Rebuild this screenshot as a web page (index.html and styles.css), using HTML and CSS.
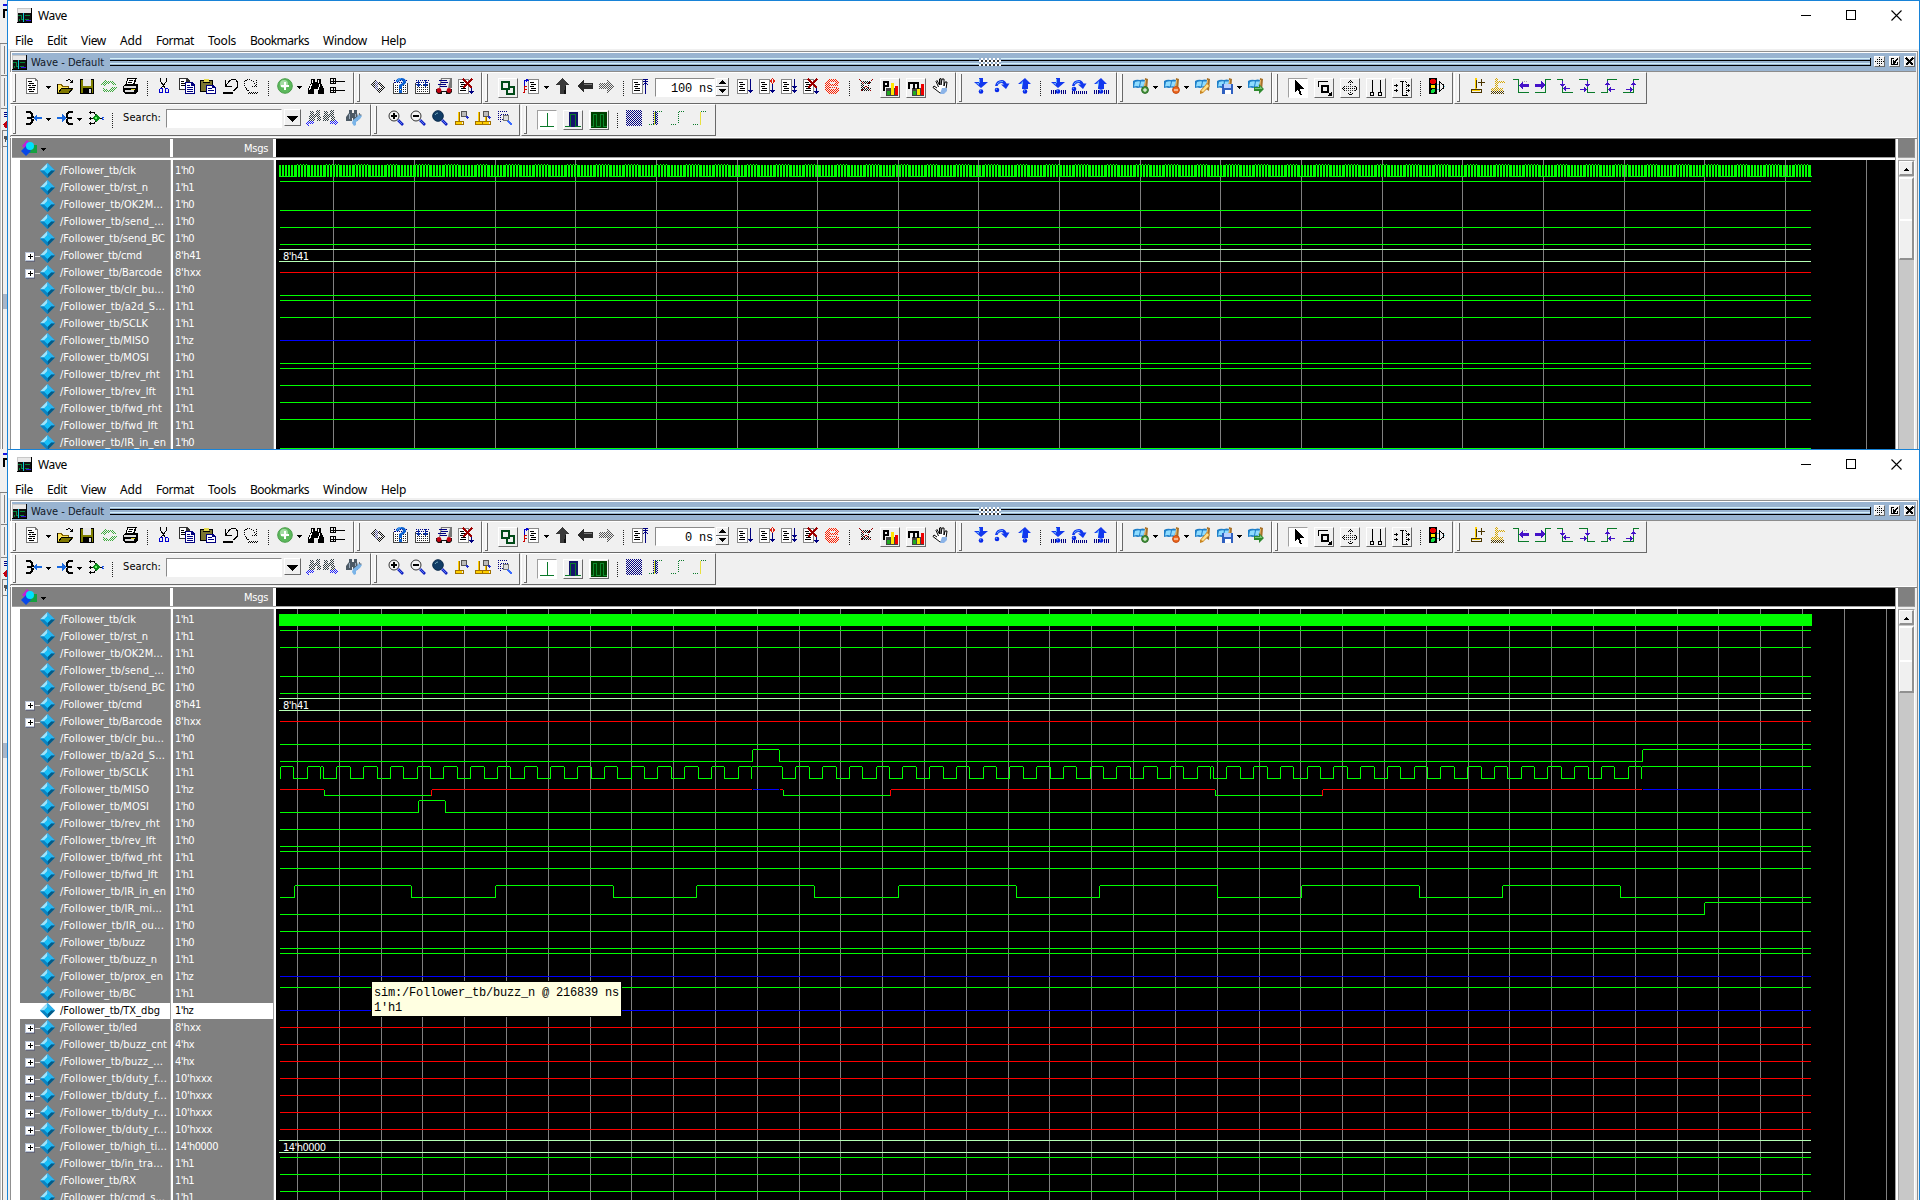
FILE: index.html
```html
<!DOCTYPE html>
<html lang="en">
<head>
<meta charset="utf-8">
<title>Wave</title>
<link rel="stylesheet" href="styles.css">
</head>
<body>
<main class="desktop" id="desktop"></main>
<script src="icons.js"></script>
<script src="wave.js"></script>
</body>
</html>
```
FILE: styles.css
```css
* { box-sizing: border-box; }
html, body { margin: 0; }
body { width: 1920px; height: 1200px; overflow: hidden; background: #f0f0f0; color: #000;
  font-family: "DejaVu Sans Condensed", "DejaVu Sans", sans-serif; font-size: 11px; }
svg { display: block; flex: none; }
.fit { display: inline-block; white-space: pre; flex: none; }
.desktop { display: flex; flex-direction: column; }
.patterns { position: absolute; }
.layer { display: flex; height: 449px; overflow: hidden; }
.layer.front { height: 751px; }
.behind { width: 7px; flex: none; }
.window { width: 1913px; flex: none; display: flex; flex-direction: column; border: 1px solid #1883d7; border-bottom: 0; background: #f0f0f0; }
.titlebar { height: 30px; flex: none; background: #fff; display: flex; padding: 7px 17px 0 9px; font: 12px/16px "Noto Sans", sans-serif; }
.titlebar .fit { margin-left: 6px; }
.controls { margin-left: auto; display: flex; gap: 34px; padding-top: 2px; }
.menubar { height: 18px; flex: none; background: #fff; display: flex; gap: 14px; padding-left: 7px; font: 12px/19px "Noto Sans", sans-serif; }
.frame { margin: 2px 1px 0 2px; flex: 1; min-height: 0; border: 1px solid #909090; border-bottom: 0; display: flex; flex-direction: column; box-shadow: inset 1px 1px #fff; padding: 1px 1px 0 1px; }
.dock { height: 19px; flex: none; display: flex; background: #99b4d1; border-bottom: 1px solid #8c8c8c; padding-top: 2px; }
.dock .fit { line-height: 16px; margin: 0 6px 0 4px; color: #101828; }
.grip { flex: 1; height: 8px; margin: 3px 3px 0 0; border-right: 1px solid #000; display: flex; justify-content: center;
  background: linear-gradient(#d4f0fa 0 1px, #99b4d1 1px 2px, #000 2px 3px, #99b4d1 3px 5px, #d4f0fa 5px 6px, #99b4d1 6px 7px, #000 7px); }
.dots { width: 22px; background: #99b4d1 conic-gradient(#fff 25%, #333 0 50%, #fff 0 75%, #99b4d1 0) 0 0 / 4px 4px; }
.dockbtns { display: flex; gap: 4px; padding: 1px 1px 0 0; }
.dockbtns span { width: 11px; height: 11px; background: #f0f0f0; border: 1px solid #fff; border-right-color: #696969; border-bottom-color: #696969; }
.toolbars { height: 66px; flex: none; margin-left: -2px; border-bottom: 1px solid #fff; }
.toolrow { display: flex; height: 32px; }
.group { height: 32px; flex: none; display: flex; align-items: flex-start; border: 1px solid #fff; border-right-color: #696969; border-bottom-color: #696969; }
.handle { width: 3px; height: 28px; margin: 1px 0 0 2px; background: #f8f8f8; border-right: 1px solid #696969; border-bottom: 1px solid #696969; flex: none; }
.icon { margin-top: 5px; flex: none; }
.caret { margin-top: 13px; flex: none; }
.sep { width: 1px; height: 15px; margin-top: 8px; flex: none; background: repeating-linear-gradient(#222 0 1px, transparent 1px 2px); }
.btn { height: 20px; margin-top: 5px; padding: 1px; flex: none; border: 1px solid #fff; border-right-color: #696969; border-bottom-color: #696969; background: #f0f0f0; }
.btn.on { background: #fff; border-color: #a0a0a0 #fff #fff #a0a0a0; }
.entry { height: 19px; margin-top: 5px; padding: 1px 1px 0 0; flex: none; background: #fff; border: 1px solid #fff; border-top-color: #8a8a8a; border-left-color: #8a8a8a; text-align: right; font: 12px/19px "Liberation Mono", monospace; }
.search { margin-top: 4px; }
.combo { height: 17px; margin-top: 4px; padding: 6px 2px; flex: none; border: 1px solid #fff; border-right-color: #696969; border-bottom-color: #696969; }
.spin { height: 18px; margin-top: 5px; flex: none; }
.label { margin-top: 6px; line-height: 14px; flex: none; }
.view { flex: 1; min-height: 0; display: flex; border-top: 1px solid #808080; margin-right: -1px; }
.list { width: 264px; flex: none; background: #fff; display: flex; flex-direction: column; }
.heads { height: 19px; flex: none; display: flex; border-bottom: 1px solid #a0a0a0; color: #fff; }
.head { background: #808080; line-height: 19px; display: flex; height: 18px; }
.head.names { width: 158px; padding: 1px 0 0 9px; }
.head.names .caret { margin: 8px 0 0 4px; }
.head.values { width: 100px; margin-left: 3px; padding-right: 5px; justify-content: flex-end; }
.rows { margin-top: 2px; flex: 1; min-height: 0; display: flex; color: #fff; }
.col { background: #808080; padding-top: 2px; overflow: hidden; }
.col.names { width: 150px; margin-left: 8px; flex: none; }
.col.values { width: 100px; flex: none; }
.rule { width: 3px; flex: none; background: #fff; border-left: 1px solid #a0a0a0; }
.row { height: 17px; display: flex; line-height: 18px; }
.row svg { margin-top: 1px; }
.expander { width: 20px; padding-left: 5px; flex: none; }
.col.names .fit { margin-left: 5px; }
.col.values .row { padding-left: 2px; }
.row.sel { color: #000; background: linear-gradient(#808080 1px, #fff 1px); }
.plot { width: 1619px; flex: none; position: relative; background: #000; }
.plotgap { height: 3px; background: #fff; border-top: 1px solid #a0a0a0; }
.plothead { height: 18px; background: #000; }
.plot text { font: 11px "DejaVu Sans Condensed", "DejaVu Sans", sans-serif; fill: #fff; }
.side { width: 17px; flex: none; display: flex; flex-direction: column; }
.corner { height: 19px; flex: none; background: #808080; border-bottom: 1px solid #a0a0a0; border-right: 1px solid #909090; }
.scroll { margin-top: 2px; flex: 1; background: #c8c8c8; border-left: 1px solid #a0a0a0; border-top: 1px solid #a0a0a0; border-right: 1px solid #fff; }
.up, .thumb { border: 1px solid #fff; border-right: 2px solid #909090; border-bottom: 2px solid #909090; background: #f0f0f0; }
.up { height: 15px; padding: 6px 3px; margin-bottom: 1px; }
.thumb { height: 83px; border-top-width: 2px; padding-top: 40px; }
.front .thumb { height: 67px; padding-top: 32px; }
.thumb::before { content: ""; display: block; height: 2px; background: #fff; }
.tip { position: absolute; left: 95px; top: 393px; width: 251px; height: 36px; border: 1px solid #000; background: #ffffe1; padding: 4px 2px; font: 12px/15px "Liberation Mono", monospace; color: #000; }
```
FILE: icons.js
```js
// Stroke, dotted-stroke and fill helpers for the 16x16 toolbar glyphs.
const S = (c, d, w = 1) => `<path d="${d}" fill="none" stroke="${c}" stroke-width="${w}"/>`;
const D = (c, d, w = 1) => `<path d="${d}" fill="none" stroke="${c}" stroke-width="${w}" stroke-dasharray="1 1"/>`;
const F = (c, d) => `<path d="${d}" fill="${c}"/>`;
const C = (c, x, y, r, s = 'none') => `<circle cx="${x}" cy="${y}" r="${r}" fill="${c}" stroke="${s}"/>`;
const svg = (w, h, body, cls = '', crisp = true, vb = `0 0 ${w} ${h}`) =>
  `<svg class="${cls}" width="${w}" height="${h}" viewBox="${vb}"${crisp ? ' shape-rendering="crispEdges"' : ''}>${body}</svg>`;

// Checkerboard paints used by disabled commands.
const paints = {};
const P = c => { const id = 'chk' + c.slice(1); paints[id] = c; return `url(#${id})`; };
const patternDefs = () => `<svg class="patterns" width="0" height="0"><defs>${Object.entries(paints).map(([id, c]) =>
  `<pattern id="${id}" width="2" height="2" patternUnits="userSpaceOnUse">${`<path shape-rendering="crispEdges" fill="${c}" d="M0 0h1v1H0zM1 1h1v1H1z"/>`}</pattern>`).join('')}</defs></svg>`;

const K = '#000', N = '#000080', G = '#0a7a2a', V = '#4412c8';
const page = x => F('#888', `M${x} 1h11v15h-11z`) + F('#fff', `M${x + 1} 2h9v13h-9z`) +
  S(K, `M${x + 2} 4.5h4M${x + 3} 6.5h5M${x + 2} 8.5h4M${x + 3} 10.5h5M${x + 2} 12.5h6`);
const tray = S(N, 'M2 4.5h2M12 4.5h2') + F('#444', 'M1 5h1v11h-1zM15 5h1v11h-1zM1 15h15v1h-15z') + F('#fff', 'M2 5h13v10h-13z') +
  D('#222', 'M3 7.5h12M3 9.5h12M3 11.5h12M3 13.5h12') + D(N, 'M2 2.5h13M3 4.5h12');
const ball = (x, y) => C('#0828e8', x, y, 2.3) + C('#5c9cff', x - .6, y - .8, .8);
const ticks = S(N, 'M1.5 12v4M3.5 12v4M5.5 12v4M11.5 12v4M13.5 12v4M15.5 12v4');
const arc = F('#1238ee', 'M1 8Q2 2 8 2q3 0 4.500 3.500L15.500 5.500 12 11 7 6.500h2.800Q8.800 4.500 7 5 4 5.500 3.500 8z') + S('#6cb0ff', 'M3 6Q5 3 9 3.500');
const book = F('#a8722a', 'M12 0l3 1-1 12-3-2z') + F('#f0c070', 'M12 2h1l-1 8h-1z') + F('#1f7fc8', 'M0 3q3-2 7-1 3-1 5 0l-2 8q-3-1-5 0-3-1-5 0z') +
  F('#8fdcff', 'M2 4q3-1 5-.500l-1 5q-2-1-5 0zM8 3.500h4l-2 5q-1-.500-3 0z');
const handleMag = S('#1020c0', 'M10 10l5 5', 2.6) + S('#6c8cff', 'M10 10l4 4', .8);
const cursorBase = x => S('#a07000', `M${x}.5 2v9M${x - 4}.5 11.500h8v3h-8z`) + S('#ffd000', `M${x - 1}.5 2v9M${x - 3} 12.500h6`) + S('#ffd000', `M${x - 3} 13.500h6`);
const mag2 = C('#bbb', 11, 4, 3, '#555') + S('#2030d0', 'M13.500 6.500l2 2', 2);
const edge = d => S(G, d);

const ICONS = {
  new: F('#777', 'M2 0h9l3 3v13h-12z') + F('#fff', 'M3 1h8v2h2v12h-10z') + S(K, 'M4 3.500h4M5 5.500h5M4 7.500h3M8 7.500h4M5 9.500h6M4 11.500h4M9 11.500h2M5 13.500h5'),
  open: S(K, 'M9.500 3q3-3 5 1M12.500 4.500h3v-3') + F('#806000', 'M0 6h5l1 2h6v7h-12z') + F('#ffe75a', 'M1 7h3l1 2h6v2h-7l-3 4z') + F('#807800', 'M4 11h12l-4 5h-12z') + S(K, 'M.500 6v9.500h11l4-5H4.500l-3 4'),
  save: F(K, 'M1 1h14v15h-14z') + F('#808000', 'M2 2h12v13h-12z') + F('#e8e8e8', 'M4 1h8v7h-8z') + F(K, 'M4 10h9v6h-9z') + F('#ddd', 'M10 11h2v4h-2z'),
  reload: F(P('#3caa3c'), 'M0 7l4-6 3 2q6-2 8 4h-3q-2-3-5-1L4 8zM16 9l-4 6-3-1q-6 2-8-4h3q2 3 5 1l3-2z'),
  print: F(K, 'M4 0h10l-2 6h3v7l-2 3H2l-2-2V8l3-2z') + F('#fff', 'M5 1h7l-2 5H4z') + F('#ddd', 'M1 8h12v2H1zM2 12h9v2H2z') + F('#e8dc28', 'M8 11h4v1h-4z') + S(K, 'M6 2.500h4M5 4.500h4'),
  cut: S(K, 'M4.500 0v3l5 8M10.500 0v3l-5 7') + S('#0000d0', 'M4.500 10.500h2v4h-3v-3zM9.500 10.500h2l1 1v3h-3z'),
  copy: F('#333', 'M0 0h8l3 3v9H0z') + F('#fff', 'M1 1h6v3h3v7H1z') + S(K, 'M2 3.500h3M2 5.500h5M2 7.500h5') + F(N, 'M6 4h7l3 3v9H6z') + F('#fff', 'M7 5h5v3h3v7H7z') + S(N, 'M8 7.500h3M8 9.500h6M8 11.500h6M8 13.500h6'),
  paste: F(K, 'M0 2h13v12H0z') + F('#7b7630', 'M1 3h11v10H1z') + F('#e6dc50', 'M4 1h5v3H4z') + F(K, 'M3 4h7v1H3z') + F(N, 'M6 7h7l3 3v6H6z') + F('#fff', 'M7 8h5v2h3v5H7z') + S(N, 'M8 10.500h4M8 12.500h6'),
  undo: S(K, 'M2.500 2v6h6M3 7.500L6.500 3q5-4 8 1v5l-4 4') + F(K, 'M0 14h10v2H0z'),
  redo: D(K, 'M13.500 2v6h-6M13 7.500L9.500 3q-5-3-8 1v5l4 4M6 14.500h10M5 15.500h10'),
  add: C('#5cb85c', 8, 8, 7.3, '#4a9e4a') + C('#a4dca4', 7, 6, 4) + F('#fff', 'M7 4h2v3h3v2H9v3H7V9H4V7h3z'),
  find: F(K, 'M3 1h4v3h2V1h4v4l3 6v5h-6v-5H6v5H0v-5l3-6z') + S('#fff', 'M3.500 6l-2 6M4.500 2v3M11.500 6l-1 6M10.500 2v3'),
  tree: S(K, 'M1.500 .500h5v5h-5zM1.500 9.500h5v5h-5zM7 3.500h9M7 12.500h9M2 3h4M4 1v4M2 12h4M4 10v4'),
  compile: F(P('#111111'), 'M1 4l4-3 3 4-3 3 6 4-2 4-4-5-5-3zM8 4l7 5-4 5-2-1 2-4-5-3z') + F(P('#5a5a9a'), 'M4 3h3v9H4z'),
  help: tray + F('#0a5fd0', 'M4 4q0-4 5-4 5 0 5 4 0 2-4 4v3H7V7q4-2 4-3 0-2-2-2t-2 2zM7 12h3v3H7z') + S('#63b6ff', 'M5 3.500q1-3 4-3'),
  simall: tray + F('#0830a0', 'M4 2h1v4h2L4.500 9 2 6h2zM11 2h1v4h2l-2.500 3L9 6h2z'),
  bug: F('#777', 'M5 0h11v10H3z') + F('#eee', 'M6 1h8l-2 9H4z') + S(N, 'M3 2.500h8M5 4.500h7M2 6.500h8M4 8.500h7') + F('#111', 'M0 11h5v2h6v-2h5v3l-2 2h-4v-2H6v2H2l-2-2z') + C('#c00010', 3, 12.5, 2.4) + C('#c00010', 13, 12.5, 2.4),
  brk: page(0) + S('#9c0000', 'M5 1l9 9M14 1l-9 9', 2) + F(N, 'M13 10h1v3h2l-2.500 3-2.500-3h2z'),
  link: S('#004a18', 'M2 2h7v7H2zM7 7h7v7H7z', 2) + F('#efefef', 'M6 6h2v2H6z'),
  restart: page(5) + S('#0000d0', 'M1.500 8V2.500h3M3 1l2 1.500L3 4') + S('#c00', 'M4 8.500H1.500v6H0M2 11.500h2'),
  up: F('#3a3a3a', 'M7.500 0L15 7h-4v9H5V7H1z') + F('#111', 'M10 8h1v8H9z'),
  left: F('#2c2c2c', 'M0 8l7-7v4h9v6H7v4z') + F('#777', 'M7 6h8v1H7z'),
  right: F(P('#555555'), 'M0 5h8V1l8 7-8 7v-4H0z'),
  steprun: page(0) + S(N, 'M11 1.500h5M11 3.500h5M13.500 2v14M11.500 7l2-3 2 3'),
  run: page(0) + S(N, 'M13.500 1v14M11 12.500h5M12 13.500h3'),
  runcont: page(0) + S(N, 'M13.500 6v9M11 12.500h5M12 13.500h3') + S('#e02010', 'M13.500 .500l2 2.500-2 2.500-2-2.500z'),
  runall: page(0) + S(N, 'M13.500 1v14M11 8.500h5M12 9.500h3M11 12.500h5M12 13.500h3'),
  stop: F(P('#ff2000'), 'M4 1h9l2 3v2h-4V4H6v3h9v1H6v3h5v-1h4v3l-3 3H4l-3-3V4z') + D('#ff2000', 'M6 6.5h8M7 7.5h7M6 9.5h8'),
  prof: F(P('#111111'), 'M3 3h10v3H6v4h7v3H3z') + D('#111', 'M10.5 5v6') + D('#900', 'M1 1l14 14M15 1L1 15'),
  perf: F('#444', 'M4 8h13v8H4z') + F('#22aa22', 'M5 11h3v4H5z') + F('#ffe600', 'M9 3h3v12H9z') + F('#e00', 'M13 6h3v9h-3z') + S(K, 'M2 11V2h4v4H3', 2),
  mem: F('#444', 'M4 8h13v8H4z') + F('#22aa22', 'M5 11h3v4H5z') + F('#ffe600', 'M9 9h3v6H9z') + F('#e00', 'M13 4h3v11h-3z') + S(K, 'M1 9V3h9v6M5.500 3v6', 2),
  hand: F('#fff', 'M3 4h2l2 4V1h2v6l1-6h2v7l2-4h1l-1 8-3 4H7L1 9V8h2l1 1z') + S(K, 'M6.500 9L4 3.500 5 2.500 7.500 7V1l1.500-.500V7L10 1h2v7l1-4h2l-1 7-2 4H8L1 9.500 2 8l3 2') + F('#8cb4e8', 'M10 10h5v3l-3 3H8z'),
  into: F('#1238ee', 'M6 0h4v4h5L8 10 1 4h5z') + F('#6cb0ff', 'M6 1h1v4H3l3 2z') + ball(8, 13.5),
  over: arc + ball(3, 12),
  out: F('#1238ee', 'M8 0l6 6h-3v5H5V6H1z') + F('#6cb0ff', 'M6 3l-3 3h2l1 4z') + ball(8, 13.5),
  into2: F('#1238ee', 'M6 0h4v4h5L8 10 1 4h5z') + F('#6cb0ff', 'M6 1h1v4H3l3 2z') + ball(8, 13.5) + ticks,
  over2: arc + ball(3, 11) + S(N, 'M1.500 13v3M3.500 13v3M5.500 13v3M7.500 13v3M9.500 13v3M11.500 13v3M13.500 13v3M15.500 13v3'),
  out2: F('#1238ee', 'M8 0l6 6h-3v5H5V6H1z') + F('#6cb0ff', 'M6 3l-3 3h2l1 4z') + ball(8, 13.5) + ticks,
  bkadd: book + C('#4a9a3a', 12, 12, 3.4, '#2a6a2a') + F('#fff', 'M11.500 10h1v1.500H14v1h-1.500V14h-1v-1.500H10v-1h1.500z'),
  bkdel: book + C('#f06a20', 12, 12, 3.4, '#c04810') + F('#fff', 'M10 11.500h4v1h-4z'),
  bkedit: book + F('#c88420', 'M5 13l7-8 3 3-7 7-3 1z') + F('#ffe08a', 'M6 13l6-7 2 2-6 6z'),
  bksave: book + F('#2f60c0', 'M5 6h11v10H5z') + F('#b8d0ff', 'M7 6h7v4H7z') + F('#fff', 'M8 12h6v4H8z'),
  bkgo: book + F('#2e8a2e', 'M6 9h5V6l5 5-5 5v-3H6z') + F('#7fc87a', 'M7 10h5V8l2.500 3H7z'),
  pointer: F(K, 'M5 0v12l3-3 2 6h2l-2-6h4z'),
  zoomsel: S(K, 'M2.500 7V1.500H12') + S(K, 'M6 6h6v6H6z', 2) + F(K, 'M16 11v5h-5z') + S(K, 'M12 12l3 3'),
  pan: D(K, 'M8.500 0v16M0 8.500h16') + D('#000', 'M6 3l2.500-2.500L11 3M6 13l2.500 2.500L11 13M3 6L.500 8.500 3 11M13 6l2.500 2.500L13 11') + D('#444', 'M4 6.5h9M4 10.5h9'),
  two: S(K, 'M4.500 0v12M12.500 0v12M2.500 12.500h3v3h-3zM10.500 12.500h3v3h-3z'),
  edit: S(K, 'M0 5.500h4M2.500 4v3M0 10.500h4M2.500 9v3M6 1.500h2.500v14H14M13 5.500h3M13 10.500h3M14.500 4v3M14.500 9v3') + D(K, 'M9 1.500h3.500v13'),
  light: F(K, 'M0 0h8v16H0z') + C('#f00000', 4, 3.5, 3) + C('#ffe600', 4, 8.5, 2) + C('#10e040', 4, 13, 2) + S(K, 'M10.500 4v9l4-3v-3z') + S('#5cc8d8', 'M8 6l2 1M8 12l2-1M15 8.500h1'),
  curadd: S('#ffd000', 'M6.500 0v11M2 11.500h9', 2) + S('#4a3500', 'M7.500 2v8M2.500 11.500h10v3h-10zM12.500 1v7M9 4.500h7'),
  curdel: F(P('#d8a800'), 'M5 0h3v10H5zM1 10h12v3H1zM8 3h7v2H8z') + F(P('#4a3800'), 'M1 13h13v3H1z'),
  pt: edge('M0 1.500h5.500v13H16') + F(V, 'M6 7l4-4v3h6v3h-6v3z') + D('#aaa', 'M9 3.500h6'),
  nt: edge('M0 14.500h10.500v-13H16') + F(V, 'M10 7L6 3v3H0v3h6v3z'),
  pf: edge('M0 1.500h5.500v13H16') + S(V, 'M5.500 3v5M7 10.500h6') + F(V, 'M3 6h5L5.500 9zM6 10.500l3-3v6z'),
  nf: edge('M0 1.500h8.500v13H16') + S(V, 'M8.500 3v5M1 11.500h6') + F(V, 'M6 6h5L8.500 9zM8 11.500l-3-3v6z'),
  pr: edge('M0 14.500h6.500v-13H16') + S(V, 'M6.500 4v5M8 11.500h6') + F(V, 'M4 7h5L6.500 3zM7 11.500l3-3v6z'),
  nr: edge('M0 14.500h10.500v-13H16') + S(V, 'M10.500 4v5M3 11.500h6') + F(V, 'M8 7h5l-2.500-4zM10 11.500l-3-3v6z'),
  exp1: S(K, 'M0 2h4l2 2v2.500H8M0 14h4l2-2V9.500H8M1 8h5', 2) + F('#1a6ae0', 'M7 8l4-4v3h5v2h-5v3z'),
  exp2: S(K, 'M16 2h-4l-2 2v2.500H9M16 14h-4l-2-2V9.500H9M15 8h-5', 2) + F('#1a6ae0', 'M10 8L5 4v3H0v2h5v3z'),
  exp3: S(K, 'M1 2.500h5l3 4M1 8h5M1 13.500h5l3-4M10 8h4M2.500 7v3M2.500 12v3M2.500 1v3') + F('#0a8a1a', 'M8 4l4 4-4 4-4-4z') + F('#6f6', 'M7 7h2v2H7z') + S('#1a50e0', 'M14 7.500h2v2h-2z'),
  fprev: F(P('#334044'), 'M5 1h4v3h2V0h4l1 11h-4V7h-2v4H4z') + F(P('#2020ff'), 'M0 13l4-4v2h5v3H4v2z'),
  fnext: F(P('#334044'), 'M1 1h4v3h2V0h4l1 11H8V7H6v4H0z') + F(P('#2020ff'), 'M16 13l-4-4v2H7v3h5v2z'),
  fopt: F('#4c5a66', 'M3 0h3v3h2V0h3v3l1 4v4H7V8H6v3H0V7l3-4z') + S('#9ab', 'M3.500 4v5M9.500 4v3') + F('#7ab4e8', 'M7 10l5-4 1-3 3 3-2 3-4 3v3l-2 1-2-3z') + S('#777', 'M13.500 3v2h2'),
  zin: C('#f4f4f4', 6, 6, 5, '#333') + F(K, 'M5 3h2v2h2v2H7v2H5V7H3V5h2z') + handleMag,
  zout: C('#f4f4f4', 6, 6, 5, '#333') + F(K, 'M3 5h6v2H3z') + handleMag,
  zfull: C('#103c66', 6, 6, 5.3, '#0a2a4a') + S('#7ab', 'M3 5q1-2 3-2') + handleMag,
  zcur: cursorBase(6) + mag2,
  zcur2: cursorBase(4) + cursorBase(11) + mag2,
  zarea: D(N, 'M1 1.500h9M1.500 1v9M4 4.500h8M3.500 5v8M1 9.500h6') + C('#ddd', 9, 8, 3, '#777') + S('#3c6cff', 'M11 11l4 4', 1.6),
  e1: S(G, 'M1 14.500h14M8.500 1v13'),
  e2: F('#14146a', 'M4 0h9v15H4z') + S(G, 'M0 14.500h5.500v-12h5v12H16', 1),
  e3: F('#004000', 'M0 0h16v16H0z') + S('#0c8a2c', 'M0 14.500h2.500v-12h3v12h4v-12h3v12H16'),
  e4: F(P('#000080'), 'M0 0h16v16H0z'),
  e5: F(P('#000080'), 'M5 1h5v14H5z') + S('#e8e040', 'M6.500 2v13') + D(G, 'M1 14.500h6M9 1.500h6M7.500 2v12'),
  e6: D(G, 'M1 14.500h6M8.500 2v12M9 1.500h6'),
  e7: D(G, 'M1 14.500h6M9 1.500h6') + S('#e8e040', 'M8.500 2v13'),
};
const SMOOTH = new Set(['add', 'bug', 'hand', 'into', 'over', 'out', 'into2', 'over2', 'out2', 'bkadd', 'bkdel', 'bkedit', 'bksave', 'bkgo', 'fopt', 'zin', 'zout', 'zfull', 'help']);
const icon = n => svg(16, 16, ICONS[n], 'icon', !SMOOTH.has(n));
const CARET = svg(5, 3, F(K, 'M0 0h5v1h-1v1h-1v1h-1v-1h-1v-1h-1z'), 'caret');
const APP = svg(15, 15, F('#c8c8c8', 'M0 0h15v15H0z') + F('#e8e8e8', 'M1 1h13v4H1z') + F('#101010', 'M1 5h13v9H1z') + F(K, 'M14 0h1v15h-15v-1h14z') +
  S('#00883a', 'M1 7.500h3.500v4M4 11.500h3M8 7.500h5M8 11.500h4M2 10.500v2') + S('#10c8d8', 'M6.500 5v9') + S('#3010e0', 'M9 12.500h5'));
const GEM = svg(15, 15, F('#0b97dc', 'M7.500 0L15 7.500 7.500 15 0 7.500z') + F('#9fe4fb', 'M7.500 0v4L4 7.500H0z') + F('#2fb4ee', 'M7.500 0L15 7.500h-4L7.500 4z') + F('#055a86', 'M15 7.500L7.500 15v-4L11 7.500z') +
  F('#0c82c0', 'M0 7.500h4L7.500 11v4z') + F('#16c0f8', 'M7.500 4L11 7.500 7.500 11 4 7.500z'), '', false);
const PLUS = svg(15, 15, F('#667', 'M1 4h9v10H1z') + F('#b8c4d8', 'M0 4h9v9H0z') + F('#fff', 'M1 5h8v7H1z') + S(K, 'M3 8.500h5M5.500 6v5') + S('#ddd', 'M10 8.500h5'));
const OBJECTS = svg(16, 16, F('#c020d8', 'M1 6l5-6 4 4-5 5z') + F('#16a040', 'M8 5h8v8H8z') + F('#0848e8', 'M0 11l5-5 5 5-5 5z') + C('#00e0ff', 9, 6, 4), '', false);
```
FILE: wave.js
```js
// [label, width in px]
const MENUS = [['File', 18], ['Edit', 20], ['View', 25], ['Add', 22], ['Format', 38], ['Tools', 28], ['Bookmarks', 59], ['Window', 44], ['Help', 25]];

// Toolbar groups: [left, right, items]; an item is [kind, left, width, argument].
const i = (n, c) => ['icon', c - 8, 16, n];
const c = x => ['caret', x - 2, 5];
const s = x => ['sep', x, 1];
const b = (n, x, on) => ['btn', x, 20, n, on];
const ROW1 = step => [
  [10, 354, [i('new', 32), c(48), i('open', 65), i('save', 87), i('reload', 109), i('print', 131), s(147), i('cut', 164), i('copy', 187), i('paste', 208), i('undo', 231), i('redo', 251), s(268), i('add', 285), c(299), i('find', 316), i('tree', 337)]],
  [354, 482, [i('compile', 379), i('help', 400), i('simall', 422), i('bug', 444), i('brk', 466)]],
  [482, 956, [b('link', 498), i('restart', 531), c(546), i('up', 563), i('left', 585), i('right', 607), s(623), i('steprun', 640), ['entry', 655, 60, step], ['spin', 716, 13], i('run', 745), i('runcont', 767), i('runall', 789), i('brk', 811), i('stop', 832), s(849), i('prof', 866), b('perf', 880), b('mem', 906), i('hand', 940)]],
  [956, 1117, [i('into', 981), i('over', 1002), i('out', 1025), s(1040), i('into2', 1058), i('over2', 1079), i('out2', 1101)]],
  [1117, 1272, [i('bkadd', 1141), c(1155), i('bkdel', 1172), c(1186), i('bkedit', 1203), i('bksave', 1225), c(1239), i('bkgo', 1256)]],
  [1272, 1453, [b('pointer', 1288, 1), b('zoomsel', 1314), b('pan', 1340), b('two', 1366), b('edit', 1392), s(1420), i('light', 1437)]],
  [1454, 1647, [i('curadd', 1477), i('curdel', 1498), i('pt', 1521), i('nt', 1543), i('pf', 1565), i('nf', 1587), i('pr', 1609), i('nr', 1631)]],
];
const ROW2 = [
  [10, 371, [i('exp1', 34), c(48), i('exp2', 65), c(79), i('exp3', 96), s(112), ['label', 123, 38, 'Search:'], ['search', 166, 116], ['combo', 284, 17], i('fprev', 313), i('fnext', 331), i('fopt', 354)]],
  [371, 520, [i('zin', 396), i('zout', 418), i('zfull', 440), i('zcur', 461), i('zcur2', 483), i('zarea', 505)]],
  [521, 716, [b('e1', 537, 1), b('e2', 563), b('e3', 589), s(617), i('e4', 634), i('e5', 656), i('e6', 678), i('e7', 700)]],
];

const fit = (t, w, cls = '') => `<span class="fit ${cls}" data-w="${w}" style="width:${w}px">${t}</span>`;

function item([kind, , w, arg, on], gap) {
  const m = `style="margin-left:${gap}px"`, mw = `style="margin-left:${gap}px;width:${w}px"`;
  if (kind === 'icon') return `<span ${m}>${icon(arg)}</span>`;
  if (kind === 'caret') return `<span ${m}>${CARET}</span>`;
  if (kind === 'sep') return `<span class="sep" ${m}></span>`;
  if (kind === 'btn') return `<span class="btn${on ? ' on' : ''}" ${mw}>${svg(16, 16, ICONS[arg])}</span>`;
  if (kind === 'label') return `<span class="label" ${m}>${fit(arg, w)}</span>`;
  if (kind === 'entry') return `<span class="entry" ${mw}>${fit(arg, arg.length * 7)}</span>`;
  if (kind === 'search') return `<span class="entry search" ${mw}></span>`;
  if (kind === 'combo') return `<span class="combo" ${mw}>${svg(11, 6, F(K, 'M0 0h11L5.500 6z'))}</span>`;
  return `<span class="spin" ${m}>${svg(13, 18, F('#fff', 'M0 0h12v8H0zM0 9h12v8H0z') + F('#696969', 'M12 0h1v18H0v-1h12zM0 8h13v1H0z') + F('#f0f0f0', 'M1 1h11v7H1zM1 10h11v7H1z') + F(K, 'M6.500 2l3.500 4H3zM3 11h7l-3.500 4z'))}</span>`;
}

function toolrow(groups) {
  let edge = 10;
  return `<div class="toolrow">${groups.map(([x, end, items]) => {
    let at = x + 6;
    const inner = items.map(it => { const h = item(it, it[1] - at); at = it[1] + it[2]; return h; }).join('');
    const g = `<div class="group" style="margin-left:${x - edge}px;width:${end - x}px"><span class="handle"></span>${inner}</div>`;
    edge = end;
    return g;
  }).join('')}</div>`;
}

// SCLK bursts: alternating edges every half period, with a short glitch between bursts.
const clock = (from, n) => Array.from({ length: n }, (_, k) => [Math.round(from + 13.375 * k), k % 2 ? 'H' : 'L']);
const SCLK = [[280, 'L'], [280, 'H'], [293, 'L'], [307, 'H'], [320, 'g'], ...clock(323, 32), [751, 'g'], ...clock(782, 32), [1210, 'g'], ...clock(1213, 32), [1641, 'g']];
const END = 1811;
const W = { "1'h0": 19, "1'h1": 19, "1'hz": 18, "8'h41": 26, "8'hxx": 26, "4'hx": 19, "10'hxxx": 37, "14'h0000": 43 };

// [name suffix, pixel width, value, trace, expandable]
const TOP = [
  ['clk', 76, "1'h0", 'clk'], ['rst_n', 88, "1'h1", 'H'], ['OK2M...', 103, "1'h0", 'L'], ['send_...', 104, "1'h0", 'L'], ['send_BC', 105, "1'h0", 'L'],
  ['cmd', 82, "8'h41", 'bus'], ['Barcode', 102, "8'hxx", 'X', 1], ['clr_bu...', 104, "1'h0", 'L'], ['a2d_S...', 105, "1'h1", 'H'], ['SCLK', 88, "1'h1", 'H'],
  ['MISO', 89, "1'hz", 'Z'], ['MOSI', 89, "1'h0", 'L'], ['rev_rht', 100, "1'h1", 'H'], ['rev_lft', 96, "1'h1", 'H'], ['fwd_rht', 102, "1'h1", 'H'],
  ['fwd_lft', 98, "1'h1", 'H'], ['IR_in_en', 106, "1'h0", 'L'],
];
const BOTTOM = [
  ['clk', 76, "1'h1", 'solid'], ['rst_n', 88, "1'h1", 'H'], ['OK2M...', 103, "1'h1", 'H'], ['send_...', 104, "1'h0", 'L'], ['send_BC', 105, "1'h0", 'L'],
  ['cmd', 82, "8'h41", 'bus'], ['Barcode', 102, "8'hxx", 'X', 1], ['clr_bu...', 104, "1'h0", 'L'],
  ['a2d_S...', 105, "1'h1", [[280, 'L'], [752, 'H'], [779, 'L'], [1642, 'H']]],
  ['SCLK', 88, "1'h1", SCLK],
  ['MISO', 89, "1'hz", [[280, 'X'], [324, 'L'], [431, 'X'], [752, 'Z'], [779, 'X'], [783, 'L'], [890, 'X'], [1215, 'L'], [1322, 'X'], [1642, 'Z']]],
  ['MOSI', 89, "1'h0", [[280, 'L'], [418, 'H'], [445, 'L']]],
  ['rev_rht', 100, "1'h0", 'L'], ['rev_lft', 96, "1'h0", 'L'], ['fwd_rht', 102, "1'h1", 'H'], ['fwd_lft', 98, "1'h1", 'H'],
  ['IR_in_en', 106, "1'h0", [[280, 'L'], [294, 'H'], [411, 'L'], [495, 'H'], [613, 'L'], [696, 'H'], [814, 'L'], [898, 'H'], [1016, 'L'], [1099, 'H'], [1217, 'L'], [1301, 'H'], [1419, 'L'], [1502, 'H'], [1620, 'L']]],
  ['IR_mi...', 102, "1'h1", [[280, 'L'], [1704, 'H']]],
  ['IR_ou...', 104, "1'h0", 'L'], ['buzz', 85, "1'h0", 'L'], ['buzz_n', 97, "1'h1", 'H'], ['prox_en', 103, "1'hz", 'Z'], ['BC', 76, "1'h1", 'H'], ['TX_dbg', 100, "1'hz", 'Z'],
  ['led', 77, "8'hxx", 'X', 1], ['buzz_cnt', 107, "4'hx", 'X', 1], ['buzz_...', 103, "4'hx", 'X', 1],
  ['duty_f...', 107, "10'hxxx", 'X', 1], ['duty_f...', 107, "10'hxxx", 'X', 1], ['duty_r...', 107, "10'hxxx", 'X', 1], ['duty_r...', 107, "10'hxxx", 'X', 1],
  ['high_ti...', 107, "14'h0000", 'bus'], ['in_tra...', 103, "1'h1", 'H'], ['RX', 76, "1'h1", 'H'], ['cmd_s...', 105, "1'h1", 'H'],
];

const LEVEL = { H: 2, L: 14, X: 8, Z: 8, g: 2 };
const COLOR = { H: '#0f0', L: '#0f0', X: '#f00', Z: '#00f', g: '#0f0' };

function trace(t, y, value) {
  if (t === 'solid') return F('#0f0', `M279 ${y + 3}h1533v12H279z`);
  if (t === 'bus') return S('#b4ffb4', `M279 ${y + 2.5}H${END}M279 ${y + 14.5}H${END}`) + `<text x="283" y="${y + 13}" textLength="${W[value]}">${value}</text>`;
  if (t === 'clk') {
    let d = '', x = 279;
    for (let k = 1; x < END; k++) {
      const nx = Math.round(279 + k * 1.4516);
      d += `M${x} ${y + 3}h1v12h-1z`;
      if (nx - x > 1) d += `M${x + 1} ${k % 2 ? y + 2 : y + 14}h1v1h-1z`;
      x = nx;
    }
    return F('#0f0', d);
  }
  const seg = typeof t === 'string' ? [[280, t]] : t;
  return seg.map(([x, st], k) => {
    const to = k + 1 < seg.length ? seg[k + 1][0] : END, l = LEVEL[st], col = COLOR[st];
    let out = to > x + 1 ? F(col, `M${x + (k ? 1 : 0)} ${y + l}H${to}v1H${x + (k ? 1 : 0)}z`) : '';
    const prev = k ? LEVEL[seg[k - 1][1]] : l;
    if (st === 'g') out += F(col, `M${x} ${y + 3}h1v12h-1z`);
    else if (prev !== l) out += F(col, `M${x} ${y + Math.min(prev, l) + 1}h1V${y + Math.max(prev, l) + 1}h-1z`);
    return out;
  }).join('');
}

function plot(rows, h, g0, gp) {
  let grid = '';
  for (let x = g0; x < 1895; x += gp) grid += `M${Math.round(x)} 0h1v${h}h-1z`;
  return svg(1619, h, F('#808080', grid) + rows.map((r, k) => trace(r[3], 2 + 17 * k, r[2])).join(''), '', true, `276 0 1619 ${h}`);
}

const BEHIND = svg(7, 751, F('#f0f0f0', 'M0 0h7v751H0z') + F('#1414e0', 'M3 4h4v2H3z') + F(K, 'M3 9h4v2H5v7H3z') +
  F('#808080', 'M0 43h7v1H0zM0 75h7v1H0zM0 108h7v1H0zM2 130h5v1H2zM2 146h5v1H2z') + F('#808080', 'M4 46h1v28H4zM4 78h1v28H4zM2 131h1v620H2z') + F('#c4c4c4', 'M0 44h1v707H0z') + F('#fff', 'M1 148h1v603H1z') +
  S(N, 'M4 112.500h3M4 114.500h3M4 116.500h3') + F('#c00010', 'M3 124l3-3h1v7H5z') + F('#555', 'M4 136h3v2l-1 4H5z') + F('#a9b6c8', 'M3 294h4v15H3z'), 'behind');

const CONTROLS = svg(11, 11, S(K, 'M0 5.500h10')) + svg(11, 11, S(K, 'M.500 .500h9v9h-9z')) + svg(11, 11, S(K, 'M.500 .500l10 10M10.500 .500l-10 10', 1.1), '', false);
const DOCKBTNS = [D(K, 'M4.500 0v9M0 4.500h9M2 2.500h5M2 6.500h5'), F(K, 'M1 1h3v1H2v5h5V5h1v3H1zM3 7V3l1 1 3-3 1 1-3 3 1 1z'), S(K, 'M1 1l7 7M8 1L1 8', 1.6)].map(d => `<span>${svg(9, 9, d)}</span>`).join('');

function windowHtml({ rows, step, height, g0, gp, selected, tip, front }) {
  const names = rows.map((r, k) => `<div class="row${k === selected ? ' sel' : ''}"><span class="expander">${r[3] === 'bus' || r[4] ? PLUS : ''}</span>${GEM}${fit('/Follower_tb/' + r[0], r[1])}</div>`).join('');
  const values = rows.map((r, k) => `<div class="row${k === selected ? ' sel' : ''}">${fit(r[2], W[r[2]])}</div>`).join('');
  return `<div class="layer${front ? ' front' : ''}">${BEHIND}<section class="window">
    <header class="titlebar">${APP}${fit('Wave', 29)}<span class="controls">${CONTROLS}</span></header>
    <nav class="menubar">${MENUS.map(m => fit(...m)).join('')}</nav>
    <div class="frame">
      <div class="dock">${APP}${fit('Wave - Default', 73)}<span class="grip"><i class="dots"></i></span><span class="dockbtns">${DOCKBTNS}</span></div>
      <div class="toolbars">${toolrow(ROW1(step))}${toolrow(ROW2)}</div>
      <div class="view">
        <div class="list">
          <div class="heads"><div class="head names">${OBJECTS}${CARET}</div><div class="head values">${fit('Msgs', 24)}</div></div>
          <div class="rows"><div class="col names">${names}</div><div class="rule"></div><div class="col values">${values}</div><div class="rule"></div></div>
        </div>
        <div class="plot"><div class="plothead"></div><div class="plotgap"></div>${plot(rows, height, g0, gp)}${tip ? `<div class="tip">${fit(tip[0], 245)}<br>${fit(tip[1], 28)}</div>` : ''}</div>
        <div class="rule"></div>
        <div class="side"><div class="corner"></div><div class="scroll"><div class="up">${svg(7, 3, F(K, 'M3 0h1v1h1v1h1v1h-5v-1h1v-1h1z'))}</div><div class="thumb"></div></div></div>
      </div>
    </div>
  </section></div>`;
}

document.getElementById('desktop').innerHTML = patternDefs() +
  windowHtml({ rows: TOP, step: '100 ns', height: 289, g0: 333.3, gp: 80.65 }) +
  windowHtml({ rows: BOTTOM, step: '0 ns', height: 591, g0: 296.9, gp: 41.81, selected: 23, front: true, tip: ['sim:/Follower_tb/buzz_n @ 216839 ns', "1'h1"] });

// Tighten or loosen tracking so each label occupies its stated width.
document.querySelectorAll('.fit').forEach(el => {
  const want = +el.dataset.w;
  el.style.width = 'auto';
  const have = el.getBoundingClientRect().width;
  el.style.letterSpacing = (want - have) / el.textContent.length + 'px';
  el.style.width = want + 'px';
});
```
